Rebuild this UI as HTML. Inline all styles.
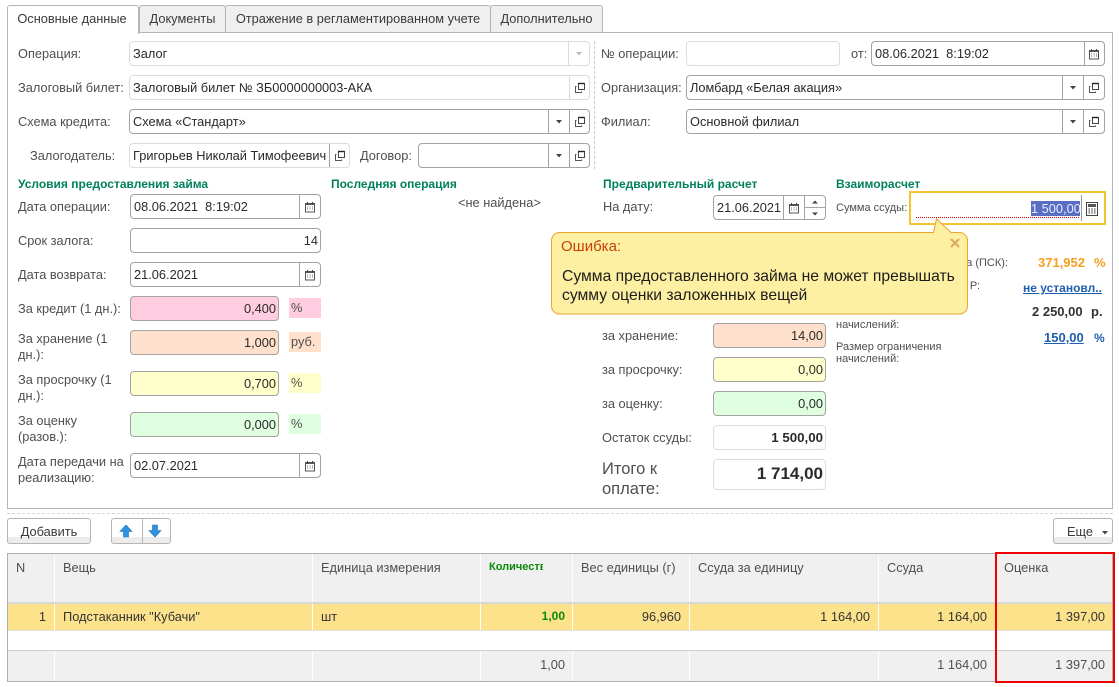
<!DOCTYPE html>
<html lang="ru"><head><meta charset="utf-8"><title>Залог</title>
<style>
html,body{margin:0;padding:0;background:#fff}
#p{position:relative;width:1119px;height:687px;overflow:hidden;background:#fff;font-family:"Liberation Sans",Arial,sans-serif;font-size:12.8px;color:#4f4f4f}
#p div,#p svg{position:absolute;box-sizing:border-box}
.t{white-space:nowrap;line-height:16px;height:16px}
.l{white-space:nowrap;line-height:16px}
.f{border:1px solid #a3a3a3;border-radius:4px;height:25px;background:#fff;color:#2a2a2a;line-height:23px;white-space:nowrap;padding:0 3px}
.r{text-align:right}
.lg{border-color:#dcdcdc}
.s{width:1px;background:#a3a3a3;top:0;bottom:0}
.h{font-size:12px;font-weight:bold;color:#00805c;white-space:nowrap;line-height:14px}
.tab{top:5px;height:28px;border:1px solid #b5b5b5;border-radius:3px 3px 0 0;background:#efefef;text-align:center;line-height:26px;color:#3a3a3a}
.c{white-space:nowrap;line-height:16px}
.b{background:#f0f0f0}
.w{background:#fff;width:1px}
.btn{border:1px solid #b5b5b5;border-radius:3px;background:linear-gradient(#fff 0,#fff 75%,#ececec 76%,#ececec 100%);color:#3a3a3a;text-align:center;line-height:25px}
.x{font-size:11px}
</style></head><body>
<div id="p">
<svg width="0" height="0" style="left:0;top:0"><defs>
<symbol id="o" viewBox="0 0 12 12"><path d="M4.500 1.500h6v6h-6z" fill="none" stroke="#444" stroke-width="1"/><path d="M4 1.500h6.500" stroke="#222" stroke-width="1.400"/><path d="M2.500 4.500h-1v6h6v-1" fill="none" stroke="#555" stroke-width="1"/></symbol>
<symbol id="k" viewBox="0 0 12 12"><path d="M1.500 2.500h9v8.500h-9z" fill="#fff" stroke="#555"/><path d="M1.500 2h9v2h-9z" fill="#555"/><path d="M3.500 1v2M8.500 1v2" stroke="#444"/><path d="M3 6h1M5.500 6h1M8 6h1M3 8h1M5.500 8h1M8 8h1" stroke="#777"/></symbol>
<symbol id="calc" viewBox="0 0 12 14"><path d="M.5.500h11v13H.500z" fill="#fff" stroke="#444"/><path d="M2 2h8v3H2z" fill="#555"/><path d="M2.500 7h1.500M5.300 7h1.500M8 7h1.500M2.500 9h1.500M5.300 9h1.500M8 9h1.500M2.500 11h1.500M5.300 11h1.500M8 11h1.500" stroke="#555" stroke-width="1.200"/></symbol>
</defs></svg>

<div style="left:7px;top:32px;width:1106px;height:477px;border:1px solid #b5b5b5"></div>
<div class="tab" style="left:139px;width:87px">Документы</div>
<div class="tab" style="left:225px;width:266px">Отражение в регламентированном учете</div>
<div class="tab" style="left:490px;width:113px">Дополнительно</div>
<div class="tab" style="left:7px;width:132px;height:29px;background:#fff;border-bottom:0;z-index:2;padding-right:2px">Основные данные</div>

<div style="left:594px;top:41px;height:128px;border-left:1px dashed #ccc"></div>

<!-- top left -->
<div class="l" style="left:18px;top:46px">Операция:</div>
<div class="f lg" style="left:129px;top:41px;width:461px">Залог<div class="s" style="left:438px;background:#dcdcdc"></div><svg style="left:445px;top:9px" width="8" height="5"><path d="M1 1h6l-3 3.500z" fill="#bbb"/></svg></div>
<div class="l" style="left:18px;top:80px">Залоговый билет:</div>
<div class="f lg" style="left:129px;top:75px;width:461px">Залоговый билет № ЗБ0000000003-АКА<div class="s" style="left:439px;background:#dcdcdc"></div><svg style="left:444px;top:6px" width="12" height="12"><use href="#o"/></svg></div>
<div class="l" style="left:18px;top:114px">Схема кредита:</div>
<div class="f" style="left:129px;top:109px;width:461px">Схема «Стандарт»<div class="s" style="left:418px"></div><div class="s" style="left:439px"></div><svg style="left:425px;top:9px" width="8" height="5"><path d="M1 1h6l-3 3.500z" fill="#444"/></svg><svg style="left:444px;top:6px" width="12" height="12"><use href="#o"/></svg></div>
<div class="l" style="left:30px;top:148px">Залогодатель:</div>
<div class="f lg" style="left:129px;top:143px;width:221px">Григорьев Николай Тимофеевич<div class="s" style="left:199px;background:#a3a3a3"></div><svg style="left:204px;top:6px" width="12" height="12"><use href="#o"/></svg></div>
<div class="l" style="left:360px;top:148px">Договор:</div>
<div class="f" style="left:418px;top:143px;width:172px"><div class="s" style="left:129px"></div><div class="s" style="left:150px"></div><svg style="left:136px;top:9px" width="8" height="5"><path d="M1 1h6l-3 3.500z" fill="#444"/></svg><svg style="left:155px;top:6px" width="12" height="12"><use href="#o"/></svg></div>

<!-- top right -->
<div class="l" style="left:601px;top:46px">№ операции:</div>
<div class="f lg" style="left:686px;top:41px;width:154px"></div>
<div class="l" style="left:851px;top:46px">от:</div>
<div class="f" style="left:871px;top:41px;width:234px">08.06.2021&nbsp; 8:19:02<div class="s" style="left:212px"></div><svg style="left:216px;top:6px" width="12" height="12"><use href="#k"/></svg></div>
<div class="l" style="left:601px;top:80px">Организация:</div>
<div class="f" style="left:686px;top:75px;width:419px">Ломбард «Белая акация»<div class="s" style="left:375px"></div><div class="s" style="left:396px"></div><svg style="left:382px;top:9px" width="8" height="5"><path d="M1 1h6l-3 3.500z" fill="#444"/></svg><svg style="left:401px;top:6px" width="12" height="12"><use href="#o"/></svg></div>
<div class="l" style="left:601px;top:114px">Филиал:</div>
<div class="f" style="left:686px;top:109px;width:419px">Основной филиал<div class="s" style="left:375px"></div><div class="s" style="left:396px"></div><svg style="left:382px;top:9px" width="8" height="5"><path d="M1 1h6l-3 3.500z" fill="#444"/></svg><svg style="left:401px;top:6px" width="12" height="12"><use href="#o"/></svg></div>

<!-- headings -->
<div class="h" style="left:18px;top:177px">Условия предоставления займа</div>
<div class="h" style="left:331px;top:177px">Последняя операция</div>
<div class="h" style="left:603px;top:177px">Предварительный расчет</div>
<div class="h" style="left:836px;top:177px">Взаиморасчет</div>

<!-- left column -->
<div class="l" style="left:18px;top:199px">Дата операции:</div>
<div class="f" style="left:130px;top:194px;width:191px">08.06.2021&nbsp; 8:19:02<div class="s" style="left:168px"></div><svg style="left:173px;top:6px" width="12" height="12"><use href="#k"/></svg></div>
<div class="l" style="left:18px;top:233px">Срок залога:</div>
<div class="f r" style="left:130px;top:228px;width:191px;padding-right:2px">14</div>
<div class="l" style="left:18px;top:267px">Дата возврата:</div>
<div class="f" style="left:130px;top:262px;width:191px">21.06.2021<div class="s" style="left:168px"></div><svg style="left:173px;top:6px" width="12" height="12"><use href="#k"/></svg></div>
<div class="l" style="left:18px;top:301px">За кредит (1 дн.):</div>
<div class="f r" style="left:130px;top:296px;width:149px;background:#ffcce0;padding-right:2px">0,400</div>
<div class="t" style="left:289px;top:298px;width:32px;height:20px;background:#ffcce0;line-height:20px;padding-left:2px">%</div>
<div class="l" style="left:18px;top:331px;width:105px;white-space:normal">За хранение (1 дн.):</div>
<div class="f r" style="left:130px;top:330px;width:149px;background:#ffe0cc;padding-right:2px">1,000</div>
<div class="t" style="left:289px;top:332px;width:32px;height:20px;background:#ffe0cc;line-height:20px;padding-left:2px">руб.</div>
<div class="l" style="left:18px;top:372px;width:105px;white-space:normal">За просрочку (1 дн.):</div>
<div class="f r" style="left:130px;top:371px;width:149px;background:#ffffcc;padding-right:2px">0,700</div>
<div class="t" style="left:289px;top:373px;width:32px;height:20px;background:#ffffcc;line-height:20px;padding-left:2px">%</div>
<div class="l" style="left:18px;top:413px;width:105px;white-space:normal">За оценку (разов.):</div>
<div class="f r" style="left:130px;top:412px;width:149px;background:#e0ffe0;padding-right:2px">0,000</div>
<div class="t" style="left:289px;top:414px;width:32px;height:20px;background:#e0ffe0;line-height:20px;padding-left:2px">%</div>
<div class="l" style="left:18px;top:454px;width:112px;white-space:normal">Дата передачи на реализацию:</div>
<div class="f" style="left:130px;top:453px;width:191px">02.07.2021<div class="s" style="left:168px"></div><svg style="left:173px;top:6px" width="12" height="12"><use href="#k"/></svg></div>

<div class="l" style="left:458px;top:195px">&lt;не найдена&gt;</div>

<!-- middle -->
<div class="l" style="left:603px;top:199px">На дату:</div>
<div class="f" style="left:713px;top:195px;width:113px">21.06.2021<div class="s" style="left:69px"></div><div class="s" style="left:90px"></div><div style="left:90px;top:11px;width:21px;height:1px;background:#a3a3a3"></div><svg style="left:74px;top:6px" width="12" height="12"><use href="#k"/></svg><svg style="left:97px;top:4px" width="8" height="4"><path d="M1 3.500h6l-3-3z" fill="#444"/></svg><svg style="left:97px;top:16px" width="8" height="4"><path d="M1 .5h6l-3 3z" fill="#444"/></svg></div>
<div class="l" style="left:602px;top:328px">за хранение:</div>
<div class="f r" style="left:713px;top:323px;width:113px;background:#ffe0cc;padding-right:2px">14,00</div>
<div class="l" style="left:602px;top:362px">за просрочку:</div>
<div class="f r" style="left:713px;top:357px;width:113px;background:#ffffcc;padding-right:2px">0,00</div>
<div class="l" style="left:602px;top:396px">за оценку:</div>
<div class="f r" style="left:713px;top:391px;width:113px;background:#e0ffe0;padding-right:2px">0,00</div>
<div class="l" style="left:602px;top:430px">Остаток ссуды:</div>
<div class="f r lg" style="left:713px;top:425px;width:113px;font-weight:bold;font-size:13.3px;padding-right:2px">1 500,00</div>
<div class="l" style="left:602px;top:459px;font-size:16.500px;line-height:20px">Итого к<br>оплате:</div>
<div class="f r lg" style="left:713px;top:459px;width:113px;height:31px;font-weight:bold;font-size:17px;line-height:28px;padding-right:2px">1 714,00</div>

<!-- right -->
<div class="t x r" style="left:940px;width:68px;top:255px">а (ПСК):</div>
<div class="t" style="left:1038px;top:255px;font-weight:bold;color:#f5a020;font-size:13px">371,952</div>
<div class="t" style="left:1094px;top:255px;font-weight:bold;color:#f5a020;font-size:13px">%</div>
<div class="t x r" style="left:950px;width:30px;top:278px">Р:</div>
<div class="t" style="left:1023px;top:280px;font-size:12px;font-weight:bold;color:#1f5fb0;text-decoration:underline">не установл..</div>
<div class="t" style="left:1032px;top:304px;font-weight:bold;color:#333;font-size:13px">2 250,00</div>
<div class="t" style="left:1091px;top:304px;font-weight:bold;color:#333;font-size:13px">р.</div>
<div class="t x" style="left:836px;top:317px">начислений:</div>
<div class="t" style="left:1044px;top:330px;font-weight:bold;color:#1f5fb0;text-decoration:underline;font-size:13px">150,00</div>
<div class="t" style="left:1094px;top:330px;font-weight:bold;color:#1f5fb0;font-size:12px">%</div>
<div class="t x" style="left:836px;top:339px">Размер ограничения</div>
<div class="t x" style="left:836px;top:351px">начислений:</div>
<div class="t x" style="left:836px;top:200px">Сумма ссуды:</div>

<div style="left:909px;top:191px;width:197px;height:34px;border:2px solid #f6c42f;background:#fff"></div>
<div style="left:1081px;top:195px;width:1px;height:26px;background:#999"></div>
<div style="left:916px;top:217px;width:163px;border-top:1px dotted #d00000"></div>
<div style="left:1031px;top:201px;width:49px;height:15px;background:#5a6fc4;color:#e8ecff;line-height:15px;white-space:nowrap;text-align:right">1 500,00</div>
<svg style="left:1086px;top:202px" width="12" height="14"><use href="#calc"/></svg>

<!-- popup -->
<svg style="left:551px;top:218px;z-index:5" width="418" height="98" viewBox="0 0 418 98"><path d="M8.500 14.500H382.500L385.500 1 400 14.500H408.500a8 8 0 0 1 8 8V88a8 8 0 0 1-8 8H8.500a8 8 0 0 1-8-8V22.500a8 8 0 0 1 8-8z" fill="#fdf0a2" stroke="#eba42f"/><path d="M400 21l8 8M408 21l-8 8" stroke="#e0a860" stroke-width="2.200"/></svg>
<div style="left:561px;top:237px;z-index:6;font-size:15px;line-height:20px;color:#c8400a;white-space:nowrap">Ошибка:</div>
<div style="left:562px;top:268px;z-index:6;font-size:15.700px;line-height:18.500px;color:#1c1c1c;white-space:nowrap">Сумма предоставленного займа не может превышать<br>сумму оценки заложенных вещей</div>

<!-- toolbar -->
<div style="left:7px;top:513px;width:1106px;border-top:1px dashed #d5d5d5"></div>
<div class="btn" style="left:7px;top:518px;width:84px;height:26px">Добавить</div>
<div class="btn" style="left:111px;top:518px;width:60px;height:26px"><div class="s" style="left:30px;background:#b5b5b5"></div><svg style="left:7px;top:5px" width="14" height="14" viewBox="0 0 14 14"><path d="M7 1l6 6.500H9.500V13h-5V7.500H1z" fill="#2f93e0" stroke="#1b74bd" stroke-width=".6"/></svg><svg style="left:36px;top:5px" width="14" height="14" viewBox="0 0 14 14"><path d="M7 13L1 6.500H4.500V1h5v5.500H13z" fill="#2f93e0" stroke="#1b74bd" stroke-width=".6"/></svg></div>
<div class="btn" style="left:1053px;top:518px;width:60px;height:26px;text-align:left;padding-left:13px">Еще<svg style="left:47px;top:11px" width="8" height="5"><path d="M1 1h6l-3 3.500z" fill="#444"/></svg></div>

<!-- table -->
<div style="left:7px;top:553px;width:1106px;height:129px;border:1px solid #b0b0b0;background:#fff"></div>
<div class="b" style="left:8px;top:554px;width:1104px;height:48px"></div>
<div style="left:8px;top:602px;width:1104px;height:2px;background:#d8d8d8"></div>
<div style="left:8px;top:604px;width:1104px;height:26px;background:#fde28c"></div>
<div style="left:8px;top:630px;width:1104px;height:1px;background:#e4e4e4"></div>
<div style="left:8px;top:650px;width:1104px;height:1px;background:#cfcfcf"></div>
<div class="b" style="left:8px;top:651px;width:1104px;height:30px"></div>
<div class="w" style="left:54px;top:554px;height:48px"></div><div class="w" style="left:54px;top:604px;height:26px"></div><div class="w" style="left:54px;top:651px;height:30px"></div>
<div class="w" style="left:312px;top:554px;height:48px"></div><div class="w" style="left:312px;top:604px;height:26px"></div><div class="w" style="left:312px;top:651px;height:30px"></div>
<div class="w" style="left:480px;top:554px;height:48px"></div><div class="w" style="left:480px;top:604px;height:26px"></div><div class="w" style="left:480px;top:651px;height:30px"></div>
<div class="w" style="left:572px;top:554px;height:48px"></div><div class="w" style="left:572px;top:604px;height:26px"></div><div class="w" style="left:572px;top:651px;height:30px"></div>
<div class="w" style="left:689px;top:554px;height:48px"></div><div class="w" style="left:689px;top:604px;height:26px"></div><div class="w" style="left:689px;top:651px;height:30px"></div>
<div class="w" style="left:878px;top:554px;height:48px"></div><div class="w" style="left:878px;top:604px;height:26px"></div><div class="w" style="left:878px;top:651px;height:30px"></div>

<div class="c" style="left:16px;top:560px">N</div>
<div class="c" style="left:63px;top:560px">Вещь</div>
<div class="c" style="left:321px;top:560px">Единица измерения</div>
<div class="c" style="left:489px;top:559px;font-size:11px;font-weight:bold;color:#0a8a0a;width:54px;overflow:hidden">Количество</div>
<div class="c" style="left:581px;top:560px">Вес единицы (г)</div>
<div class="c" style="left:698px;top:560px">Ссуда за единицу</div>
<div class="c" style="left:887px;top:560px">Ссуда</div>
<div class="c" style="left:1004px;top:560px">Оценка</div>

<div class="c r" style="left:16px;top:609px;width:30px;color:#333">1</div>
<div class="c" style="left:63px;top:609px;color:#333">Подстаканник "Кубачи"</div>
<div class="c" style="left:321px;top:609px;color:#333">шт</div>
<div class="c r" style="left:500px;top:608px;width:65px;font-size:12px;font-weight:bold;color:#0a8a0a">1,00</div>
<div class="c r" style="left:600px;top:609px;width:81px;color:#333">96,960</div>
<div class="c r" style="left:770px;top:609px;width:100px;color:#333">1 164,00</div>
<div class="c r" style="left:887px;top:609px;width:100px;color:#333">1 164,00</div>
<div class="c r" style="left:1005px;top:609px;width:100px;color:#333">1 397,00</div>
<div class="c r" style="left:500px;top:657px;width:65px">1,00</div>
<div class="c r" style="left:887px;top:657px;width:100px">1 164,00</div>
<div class="c r" style="left:1005px;top:657px;width:100px">1 397,00</div>

<div style="left:995px;top:552px;width:120px;height:131px;border:2px solid #f00000;z-index:7"></div>
</div>
</body></html>
